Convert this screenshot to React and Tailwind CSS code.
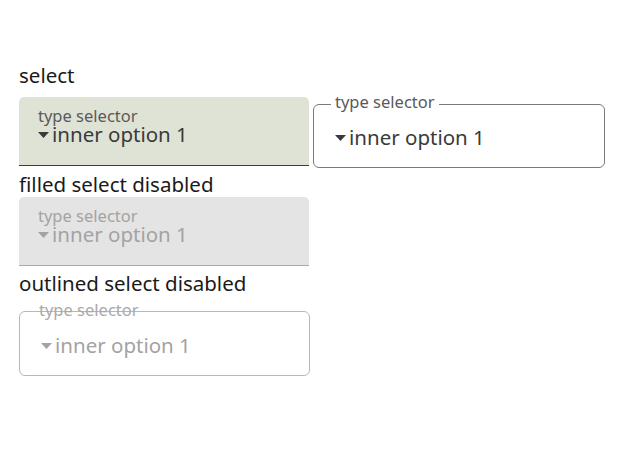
const Caret = ({ className }) => (
  <svg width="11" height="6" viewBox="0 0 11 6" className={className}>
    <path d="M0 0 L11 0 L5.5 6 Z" fill="currentColor" />
  </svg>
);

const Value = ({ tone, className = '' }) => (
  <div className={`flex items-center text-[20.5px] leading-[24px] ${tone} ${className}`}>
    <Caret className="mr-[3px] mt-[1px]" />
    <span>inner option 1</span>
  </div>
);

const FilledSelect = ({ disabled }) => (
  <div
    className={`w-[290px] h-[69px] rounded-t-[5px] border-b px-[19px] pt-[10px] ${
      disabled ? 'bg-[#e4e4e4] border-[#a9a9a9]' : 'bg-[#dfe3d5] border-[#3c3c3c]'
    }`}
  >
    <div className={`text-[16.5px] leading-[17px] ${disabled ? 'text-[#a3a3a3]' : 'text-[#5a5a5a]'}`}>
      type selector
    </div>
    <Value tone={disabled ? 'text-[#a3a3a3]' : 'text-[#3a3a3a]'} className="-mt-[2px]" />
  </div>
);

const OutlinedSelect = ({ disabled, className = '' }) => (
  <div
    className={`relative w-[292px] rounded-[6px] border px-[21px] ${
      disabled ? 'h-[65px] border-[#b8b8b8] pt-[21px]' : 'h-[64px] border-[#7a7a7a] pt-[20px]'
    } ${className}`}
  >
    <span
      className={`absolute leading-[17px] text-[16.5px] ${
        disabled
          ? 'left-[19px] -top-[11px] text-[#a9a9a9]'
          : 'left-[17px] -top-[12px] px-[4px] bg-white text-[#5a5a5a]'
      }`}
    >
      type selector
    </span>
    <Value tone={disabled ? 'text-[#a3a3a3]' : 'text-[#3a3a3a]'} />
  </div>
);

export default function App() {
  return (
    <div
      className="min-h-[463px] bg-white pl-[19px] pt-[62px] text-[#1a1a1a]"
      style={{ fontFamily: '"Noto Sans", "Open Sans", sans-serif' }}
    >
      <div className="text-[20.5px] leading-[26px]">select</div>
      <div className="mt-[9px] flex items-start gap-[4px]">
        <FilledSelect />
        <OutlinedSelect className="mt-[7px]" />
      </div>
      <div className="mt-[3px] text-[20.5px] leading-[26px]">filled select disabled</div>
      <div>
        <FilledSelect disabled />
      </div>
      <div className="mt-[4px] text-[20.5px] leading-[26px]">outlined select disabled</div>
      <div className="mt-[15px]">
        <OutlinedSelect disabled className="!w-[291px]" />
      </div>
    </div>
  );
}
